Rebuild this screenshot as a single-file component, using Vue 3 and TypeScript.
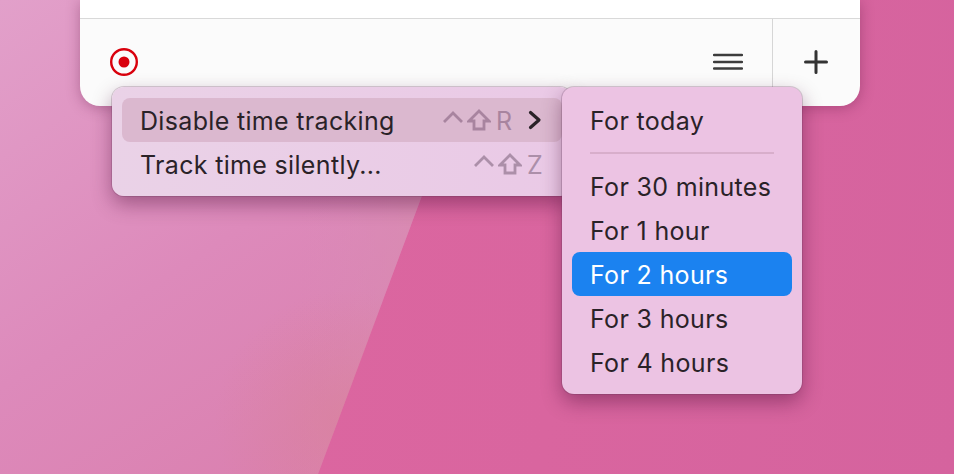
<script setup lang="ts">
interface Item { label: string; active?: boolean }
const before: Item[] = [{ label: 'For today' }]
const after: Item[] = [
  { label: 'For 30 minutes' },
  { label: 'For 1 hour' },
  { label: 'For 2 hours', active: true },
  { label: 'For 3 hours' },
  { label: 'For 4 hours' },
]
</script>

<template>
  <div class="desktop">
    <svg class="wallpaper" viewBox="0 0 954 474" aria-hidden="true">
      <defs>
        <linearGradient id="wedge" x1="0" y1="0" x2="0.7" y2="1">
          <stop offset="0" stop-color="#e2a0ca" />
          <stop offset="0.55" stop-color="#dd8abb" />
          <stop offset="1" stop-color="#da7fae" />
        </linearGradient>
        <radialGradient id="warm" gradientUnits="userSpaceOnUse" cx="345" cy="420" r="130">
          <stop offset="0" stop-color="#d98298" stop-opacity="0.6" />
          <stop offset="1" stop-color="#d98298" stop-opacity="0" />
        </radialGradient>
        <linearGradient id="edge" gradientUnits="userSpaceOnUse" x1="300" y1="190" x2="425" y2="190">
          <stop offset="0" stop-color="#d88cb8" stop-opacity="0" />
          <stop offset="1" stop-color="#d88cb0" stop-opacity="0.8" />
        </linearGradient>
      </defs>
      <polygon points="0,0 495,0 318,474 0,474" fill="url(#wedge)" />
      <polygon points="0,0 495,0 318,474 0,474" fill="url(#edge)" />
      <polygon points="200,240 406,240 318,474 200,474" fill="url(#warm)" />
    </svg>

    <section class="window">
      <div class="content"></div>
      <footer class="toolbar">
        <svg class="record" width="30" height="30" viewBox="0 0 30 30" aria-hidden="true">
          <circle cx="15" cy="15" r="12.800" fill="none" stroke="#d9000c" stroke-width="2.400" />
          <circle cx="15" cy="15" r="5.500" fill="#d9000c" />
        </svg>
        <svg class="lines" width="30" height="18" viewBox="0 0 30 18" aria-hidden="true">
          <path d="M1 2H29M1 9H29M1 15.500H29" stroke="#3c3c3c" stroke-width="2.500" stroke-linecap="round" />
        </svg>
        <div class="add">
          <svg width="26" height="26" viewBox="0 0 26 26" aria-hidden="true">
            <path d="M2.500 13H23.500M13 2.500V23.500" stroke="#333" stroke-width="3" stroke-linecap="round" />
          </svg>
        </div>
      </footer>
    </section>

    <div class="menu main">
      <div class="row hover">
        <span class="label">Disable time tracking</span>
        <span class="keys first">
          <svg class="caret" width="22" height="14" viewBox="0 0 22 14"><path d="M2 12L11 3L20 12" class="key" /></svg>
          <svg width="24" height="22" viewBox="0 0 24 22"><path d="M12 2L22 12H17V20H7V12H2Z" class="key" /></svg>
          <span class="letter">R</span>
        </span>
        <svg class="chev" width="14" height="20" viewBox="0 0 14 20"><path d="M2.500 2.500L11 10L2.500 17.500" /></svg>
      </div>
      <div class="row">
        <span class="label">Track time silently...</span>
        <span class="keys last">
          <svg class="caret" width="22" height="14" viewBox="0 0 22 14"><path d="M2 12L11 3L20 12" class="key" /></svg>
          <svg width="24" height="22" viewBox="0 0 24 22"><path d="M12 2L22 12H17V20H7V12H2Z" class="key" /></svg>
          <span class="letter">Z</span>
        </span>
      </div>
    </div>

    <div class="menu sub">
      <div v-for="i in before" :key="i.label" class="row"><span class="label">{{ i.label }}</span></div>
      <div class="sep"></div>
      <div v-for="i in after" :key="i.label" class="row" :class="{ selected: i.active }"><span class="label">{{ i.label }}</span></div>
    </div>
  </div>
</template>

<style>
html, body { margin: 0; padding: 0; }
</style>

<style scoped>
.desktop {
  position: relative;
  width: 954px;
  height: 474px;
  overflow: hidden;
  background: linear-gradient(100deg, #dc66a0 30%, #d9659f 60%, #d5639e 100%);
  font-family: Inter, "Noto Sans", sans-serif;
}
.wallpaper { position: absolute; inset: 0; width: 954px; height: 474px; }
.window {
  position: relative;
  margin-left: 80px;
  width: 780px;
  height: 106px;
  border-radius: 0 0 20px 20px;
  background: #fbfbfb;
  box-shadow: 0 2px 14px rgba(90, 20, 60, 0.35);
  display: flex;
  flex-direction: column;
}
.content { height: 18px; background: #fff; border-bottom: 1px solid #d9d9d9; flex: none; }
.toolbar { flex: 1; display: flex; align-items: flex-start; padding-left: 29px; }
.record { margin-top: 28px; }
.lines { margin-left: auto; margin-top: 34px; margin-right: 29px; }
.add {
  width: 88px;
  align-self: stretch;
  border-left: 1px solid #d6d6d6;
  display: flex;
  justify-content: center;
  padding-top: 30px;
  box-sizing: border-box;
}
.add svg { margin-left: -1px; }
.menu {
  position: absolute;
  top: 87px;
  box-sizing: border-box;
  border-radius: 12px;
  padding: 11px 10px;
  color: #2a2228;
  font-size: 25px;
  letter-spacing: 0.33px;
  box-shadow: 0 0 0 1px rgba(90, 50, 80, 0.22), 0 8px 20px rgba(70, 10, 50, 0.42);
}
.main { left: 112px; width: 460px; height: 109px; background: linear-gradient(90deg, #ead2e7, #eac9e6); }
.sub { left: 562px; width: 240px; height: 307px; background: #ecc3e3; }
.row {
  height: 44px;
  line-height: 44px;
  padding-left: 18px;
  border-radius: 8px;
  display: flex;
  align-items: center;
  white-space: nowrap;
}
.hover { background: #dbb8cf; }
.label { flex: none; padding-top: 2px; }
.keys { display: flex; align-items: center; gap: 3px; margin-left: auto; color: #ac8fa9; }
.first { margin-right: 16px; color: #a8849f; }
.last { margin-right: 19px; }
.first .key { stroke: #a8849f; }
.caret { margin-top: -7px; }
.letter { width: 18px; padding: 2px 0 0 2px; box-sizing: border-box; }
.key { fill: none; stroke: #ac8fa9; stroke-width: 2.800; stroke-linejoin: miter; }
.chev { margin-right: 20px; }
.chev path { fill: none; stroke: #2a2228; stroke-width: 3.200; stroke-linejoin: round; stroke-linecap: round; }
.sep { height: 2px; margin: 10px 18px; background: #d8aecb; }
.selected { background: #1b82f0; color: #fff; }
</style>
